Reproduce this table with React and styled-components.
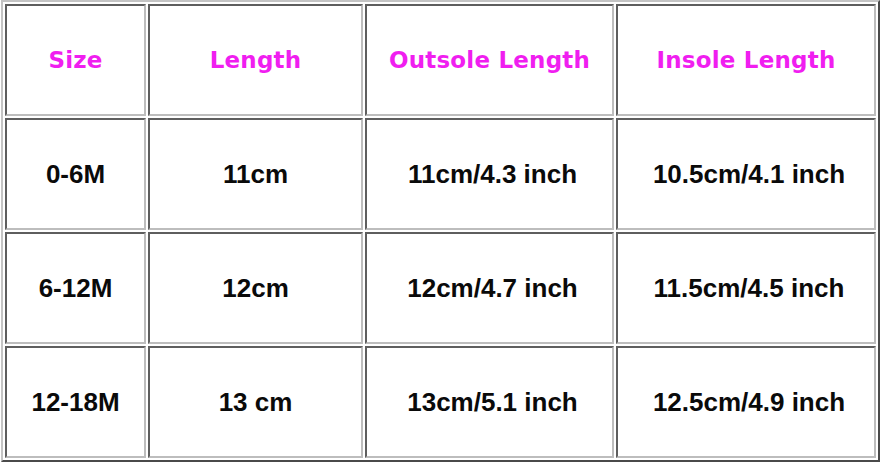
import React from "react";
import styled, { createGlobalStyle } from "styled-components";

const GlobalStyle = createGlobalStyle`
  html, body {
    margin: 0;
    padding: 0;
    background: #ffffff;
  }
`;

// data
const columns = [
  { title: "Size", width: 141, indent: 0 },
  { title: "Length", width: 215, indent: 0 },
  { title: "Outsole Length", width: 249, indent: 6 },
  { title: "Insole Length", width: 260, indent: 6 },
];

const rows = [
  ["0-6M", "11cm", "11cm/4.3 inch", "10.5cm/4.1 inch"],
  ["6-12M", "12cm", "12cm/4.7 inch", "11.5cm/4.5 inch"],
  ["12-18M", "13 cm", "13cm/5.1 inch", "12.5cm/4.9 inch"],
];

function App() {
  return (
    <>
      <GlobalStyle />
      <Page>
        <SizeTable>
          <colgroup>
            {columns.map((col) => (
              <col key={col.title} style={{ width: col.width }} />
            ))}
          </colgroup>
          <thead>
            <tr>
              {columns.map((col) => (
                <HeadCell key={col.title}>{col.title}</HeadCell>
              ))}
            </tr>
          </thead>
          <tbody>
            {rows.map((row) => (
              <tr key={row[0]}>
                {row.map((value, i) => (
                  <BodyCell key={i} $indent={columns[i].indent}>
                    {value}
                  </BodyCell>
                ))}
              </tr>
            ))}
          </tbody>
        </SizeTable>
      </Page>
    </>
  );
}

export default App;

// styles
const Page = styled.div`
  width: 882px;
  height: 466px;
  padding: 0 0 0 1px;
  box-sizing: border-box;
`;

const SizeTable = styled.table`
  table-layout: fixed;
  width: 879px;
  border-collapse: separate;
  border-spacing: 2px;
  border-style: solid;
  border-width: 2px;
  border-color: #c4c4c4 #4a4a4a #4a4a4a #c4c4c4;
`;

const Cell = styled.td`
  box-sizing: border-box;
  border-style: solid;
  border-width: 2px;
  border-color: #5e5e5e #bdbdbd #bdbdbd #5e5e5e;
  text-align: center;
  vertical-align: middle;
  padding: 0;
`;

const HeadCell = styled(Cell).attrs({ as: "th" })`
  height: 112px;
  color: #f01ef0;
  font-family: "DejaVu Sans", Verdana, sans-serif;
  font-weight: bold;
  font-size: 23px;
  letter-spacing: 0.2px;
`;

const BodyCell = styled(Cell)`
  height: 112px;
  padding-left: ${(p) => p.$indent}px;
  color: #0a0a0a;
  font-family: "Liberation Sans", Arial, sans-serif;
  font-weight: bold;
  font-size: 26px;
`;
